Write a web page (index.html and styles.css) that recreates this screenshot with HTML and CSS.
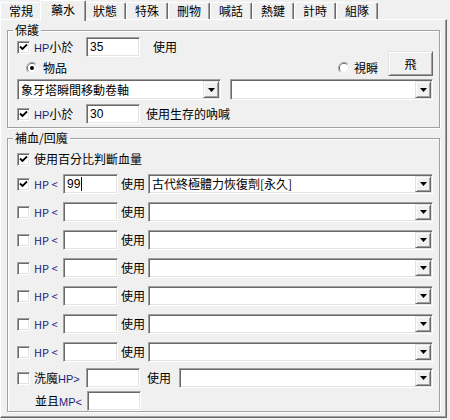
FILE: index.html
```html
<!DOCTYPE html>
<html lang="zh-Hant">
<head>
  <meta charset="UTF-8" />
  <title>藥水設定</title>
  <link rel="stylesheet" href="styles.css">
</head>
<body>
  <div class="tabs">
    <div class="tab">常規</div>
    <div class="tab active">藥水</div>
    <div class="tab">狀態</div>
    <div class="tab">特殊</div>
    <div class="tab">刪物</div>
    <div class="tab">喊話</div>
    <div class="tab">熱鍵</div>
    <div class="tab">計時</div>
    <div class="tab">組隊</div>
  </div>

  <div class="panel">
    <!-- 保護 -->
    <div class="group group-protect">
      <span class="group-title">保護</span>

      <div class="row row-first">
        <span class="check on"><svg width="9" height="9" viewBox="0 0 9 9"><path d="M1 3.5 L3.5 6 L8 1.5" fill="none" stroke="#000" stroke-width="1.8"/></svg></span>
        <span class="label w52"><span class="en">HP</span>小於</span>
        <div class="edit w54">35</div>
        <span class="text use-a">使用</span>
      </div>

      <div class="row row-radio">
        <span class="radio radio-item">
          <svg width="12" height="12" viewBox="0 0 12 12">
            <path d="M2.1 9.9 A5.5 5.5 0 0 1 9.9 2.1" fill="none" stroke="#a0a0a0"/>
            <path d="M9.9 2.1 A5.5 5.5 0 0 1 2.1 9.9" fill="none" stroke="#fff"/>
            <path d="M2.8 9.2 A4.5 4.5 0 0 1 9.2 2.8" fill="none" stroke="#696969"/>
            <path d="M9.2 2.8 A4.5 4.5 0 0 1 2.8 9.2" fill="none" stroke="#e3e3e3"/>
            <circle cx="6" cy="6" r="4" fill="#fff"/>
            <circle cx="6" cy="6" r="2" fill="#000"/>
          </svg>
        </span>
        <span class="text">物品</span>
        <span class="spacer"></span>
        <span class="radio">
          <svg width="12" height="12" viewBox="0 0 12 12">
            <path d="M2.1 9.9 A5.5 5.5 0 0 1 9.9 2.1" fill="none" stroke="#a0a0a0"/>
            <path d="M9.9 2.1 A5.5 5.5 0 0 1 2.1 9.9" fill="none" stroke="#fff"/>
            <path d="M2.8 9.2 A4.5 4.5 0 0 1 9.2 2.8" fill="none" stroke="#696969"/>
            <path d="M9.2 2.8 A4.5 4.5 0 0 1 2.8 9.2" fill="none" stroke="#e3e3e3"/>
            <circle cx="6" cy="6" r="4" fill="#fff"/>
          </svg>
        </span>
        <span class="text">視瞬</span>
        <div class="btn btn-fly">飛</div>
      </div>

      <div class="row row-combo">
        <div class="combo tall w204">
          <span class="combo-text">象牙塔瞬間移動卷軸</span>
          <span class="combo-btn"><svg width="7" height="4" viewBox="0 0 7 4"><polygon points="0,0 7,0 3.5,4" fill="#000"/></svg></span>
        </div>
        <div class="combo tall fill combo-second">
          <span class="combo-text"></span>
          <span class="combo-btn"><svg width="7" height="4" viewBox="0 0 7 4"><polygon points="0,0 7,0 3.5,4" fill="#000"/></svg></span>
        </div>
      </div>

      <div class="row row-last">
        <span class="check on"><svg width="9" height="9" viewBox="0 0 9 9"><path d="M1 3.5 L3.5 6 L8 1.5" fill="none" stroke="#000" stroke-width="1.8"/></svg></span>
        <span class="label w52"><span class="en">HP</span>小於</span>
        <div class="edit w54">30</div>
        <span class="text use-b">使用生存的吶喊</span>
      </div>
    </div>

    <!-- 補血/回魔 -->
    <div class="group group-heal">
      <span class="group-title">補血/回魔</span>

      <div class="row row-percent">
        <span class="check on"><svg width="9" height="9" viewBox="0 0 9 9"><path d="M1 3.5 L3.5 6 L8 1.5" fill="none" stroke="#000" stroke-width="1.8"/></svg></span>
        <span class="text">使用百分比判斷血量</span>
      </div>

      <div class="row row-hp">
        <span class="check on"><svg width="9" height="9" viewBox="0 0 9 9"><path d="M1 3.5 L3.5 6 L8 1.5" fill="none" stroke="#000" stroke-width="1.8"/></svg></span>
        <span class="label w29 en">HP &lt;</span>
        <div class="edit w55">99<span class="caret"></span></div>
        <span class="text use-c">使用</span>
        <div class="combo fill">
          <span class="combo-text">古代終極體力恢復劑[永久]</span>
          <span class="combo-btn"><svg width="7" height="4" viewBox="0 0 7 4"><polygon points="0,0 7,0 3.5,4" fill="#000"/></svg></span>
        </div>
      </div>

      <div class="row row-hp">
        <span class="check"></span>
        <span class="label w29 en">HP &lt;</span>
        <div class="edit w55"></div>
        <span class="text use-c">使用</span>
        <div class="combo fill">
          <span class="combo-text"></span>
          <span class="combo-btn"><svg width="7" height="4" viewBox="0 0 7 4"><polygon points="0,0 7,0 3.5,4" fill="#000"/></svg></span>
        </div>
      </div>

      <div class="row row-hp">
        <span class="check"></span>
        <span class="label w29 en">HP &lt;</span>
        <div class="edit w55"></div>
        <span class="text use-c">使用</span>
        <div class="combo fill">
          <span class="combo-text"></span>
          <span class="combo-btn"><svg width="7" height="4" viewBox="0 0 7 4"><polygon points="0,0 7,0 3.5,4" fill="#000"/></svg></span>
        </div>
      </div>

      <div class="row row-hp">
        <span class="check"></span>
        <span class="label w29 en">HP &lt;</span>
        <div class="edit w55"></div>
        <span class="text use-c">使用</span>
        <div class="combo fill">
          <span class="combo-text"></span>
          <span class="combo-btn"><svg width="7" height="4" viewBox="0 0 7 4"><polygon points="0,0 7,0 3.5,4" fill="#000"/></svg></span>
        </div>
      </div>

      <div class="row row-hp">
        <span class="check"></span>
        <span class="label w29 en">HP &lt;</span>
        <div class="edit w55"></div>
        <span class="text use-c">使用</span>
        <div class="combo fill">
          <span class="combo-text"></span>
          <span class="combo-btn"><svg width="7" height="4" viewBox="0 0 7 4"><polygon points="0,0 7,0 3.5,4" fill="#000"/></svg></span>
        </div>
      </div>

      <div class="row row-hp">
        <span class="check"></span>
        <span class="label w29 en">HP &lt;</span>
        <div class="edit w55"></div>
        <span class="text use-c">使用</span>
        <div class="combo fill">
          <span class="combo-text"></span>
          <span class="combo-btn"><svg width="7" height="4" viewBox="0 0 7 4"><polygon points="0,0 7,0 3.5,4" fill="#000"/></svg></span>
        </div>
      </div>

      <div class="row row-hp">
        <span class="check"></span>
        <span class="label w29 en">HP &lt;</span>
        <div class="edit w55"></div>
        <span class="text use-c">使用</span>
        <div class="combo fill">
          <span class="combo-text"></span>
          <span class="combo-btn"><svg width="7" height="4" viewBox="0 0 7 4"><polygon points="0,0 7,0 3.5,4" fill="#000"/></svg></span>
        </div>
      </div>

      <div class="row row-mp">
        <span class="check"></span>
        <span class="label w52">洗魔<span class="en">HP&gt;</span></span>
        <div class="edit w54"></div>
        <span class="text use-d">使用</span>
        <div class="combo fill combo-mp">
          <span class="combo-text"></span>
          <span class="combo-btn"><svg width="7" height="4" viewBox="0 0 7 4"><polygon points="0,0 7,0 3.5,4" fill="#000"/></svg></span>
        </div>
      </div>

      <div class="row row-and">
        <span class="label w52 indent">並且<span class="en">MP&lt;</span></span>
        <div class="edit w54"></div>
      </div>
    </div>
  </div>
</body>
</html>
```

FILE: styles.css
```css
* {
  box-sizing: border-box;
}

body {
  margin: 0;
  width: 450px;
  height: 420px;
  background-color: #f0f0f0;
  color: #000;
  font-family: "Liberation Sans", "Noto Sans CJK TC", sans-serif;
  font-size: 12px;
  line-height: 16px;
  overflow: hidden;
}

/* tab strip */
.tabs {
  display: flex;
  align-items: flex-start;
  height: 19px;
}

.tab {
  width: 42px;
  height: 17px;
  margin-top: 2px;
  border-top: 1px solid #fff;
  border-left: 1px solid #fff;
  border-right: 1px solid #696969;
  border-radius: 2px 2px 0 0;
  box-shadow: inset -1px 0 #a0a0a0;
  text-align: center;
  line-height: 16px;
  font-family: "Noto Sans CJK TC", sans-serif;
}

.tab.active {
  position: relative;
  z-index: 1;
  width: 46px;
  height: 21px;
  margin: 0 -2px -2px;
  background-color: #f0f0f0;
  line-height: 17px;
}

.panel {
  width: 447px;
  height: 399px;
  padding: 10px 6px 0;
  border: 1px solid;
  border-color: #fff #696969 #696969 #fff;
  box-shadow: inset -1px -1px #a0a0a0;
}

/* etched group box */
.group {
  position: relative;
  border: 1px solid #a0a0a0;
  box-shadow: inset 1px 1px #fff, 1px 1px #fff;
}

.group-heal {
  margin-top: 10px;
}

.group-title {
  position: absolute;
  top: -9px;
  left: 5px;
  padding: 0 2px;
  background-color: #f0f0f0;
  font-family: "Noto Sans CJK TC", sans-serif;
}

.group-protect {
  padding-bottom: 3px;
}

.row {
  display: flex;
  align-items: center;
  padding: 0 6px 0 9px;
}

.row-first { margin-top: 6px; height: 20px; }
.row-radio { margin-top: 3px; height: 16px; }
.row-combo { margin-top: 3px; height: 21px; }
.row-last { margin-top: 4px; height: 20px; }
.row-percent { margin-top: 12px; height: 16px; }
.row-hp { margin-top: 8px; height: 20px; }
.row-percent + .row-hp { margin-top: 7px; }
.row-mp { margin-top: 6px; height: 20px; }
.row-and { margin-top: 3px; height: 20px; }

.text {
  font-family: "Noto Sans CJK TC", sans-serif;
  white-space: nowrap;
}

.en {
  font-family: "Liberation Sans", sans-serif;
  font-size: 11px;
  color: #1e1e78;
}

.label {
  flex: none;
  white-space: nowrap;
  font-family: "Noto Sans CJK TC", sans-serif;
}

.w29 { width: 29px; }
.w52 { width: 52px; }
.w54 { width: 54px; }
.w55 { width: 55px; }
.w204 { width: 204px; }

.indent { margin-left: 18px; }

.use-a { margin-left: 13px; }
.use-b { margin-left: 6px; }
.use-c { margin-left: 3px; width: 24px; }
.use-d { margin-left: 7px; width: 24px; }

.spacer { flex: 1; }

/* sunken controls */
.check, .edit, .combo {
  background-color: #fff;
  border: 1px solid;
  border-color: #a0a0a0 #fff #fff #a0a0a0;
  box-shadow: inset 1px 1px #696969, inset -1px -1px #e3e3e3;
}

.check {
  flex: none;
  width: 13px;
  height: 13px;
  margin-right: 4px;
  padding: 1px;
  display: flex;
}

.edit {
  flex: none;
  height: 20px;
  padding: 0 3px;
  line-height: 18px;
  font-size: 12px;
  font-family: "Liberation Sans", sans-serif;
}

.caret {
  display: inline-block;
  width: 1px;
  height: 14px;
  margin-left: 1px;
  background-color: #000;
  vertical-align: -3px;
}

.radio {
  flex: none;
  width: 12px;
  height: 12px;
  margin-right: 4px;
  display: flex;
}

.radio-item {
  margin-left: 9px;
  margin-right: 5px;
}

.combo {
  display: flex;
  height: 20px;
  padding: 1px;
}

.combo.tall {
  height: 21px;
}

.combo.fill {
  flex: 1;
  margin-left: 3px;
}

.combo-second.fill {
  margin-left: 9px;
}

.combo-mp.fill {
  margin-left: 8px;
}

.combo-text {
  flex: 1;
  padding-left: 2px;
  line-height: 16px;
  white-space: nowrap;
  overflow: hidden;
  font-family: "Noto Sans CJK TC", sans-serif;
}

.tall .combo-text {
  line-height: 17px;
}

/* raised buttons */
.combo-btn, .btn {
  display: flex;
  align-items: center;
  justify-content: center;
  background-color: #f0f0f0;
  border: 1px solid;
  border-color: #e3e3e3 #696969 #696969 #e3e3e3;
  box-shadow: inset 1px 1px #fff, inset -1px -1px #a0a0a0;
}

.combo-btn {
  flex: none;
  width: 16px;
}

.btn {
  font-family: "Noto Sans CJK TC", sans-serif;
}

.btn-fly {
  flex: none;
  align-self: flex-end;
  width: 45px;
  height: 25px;
  margin-left: 10px;
}
```
